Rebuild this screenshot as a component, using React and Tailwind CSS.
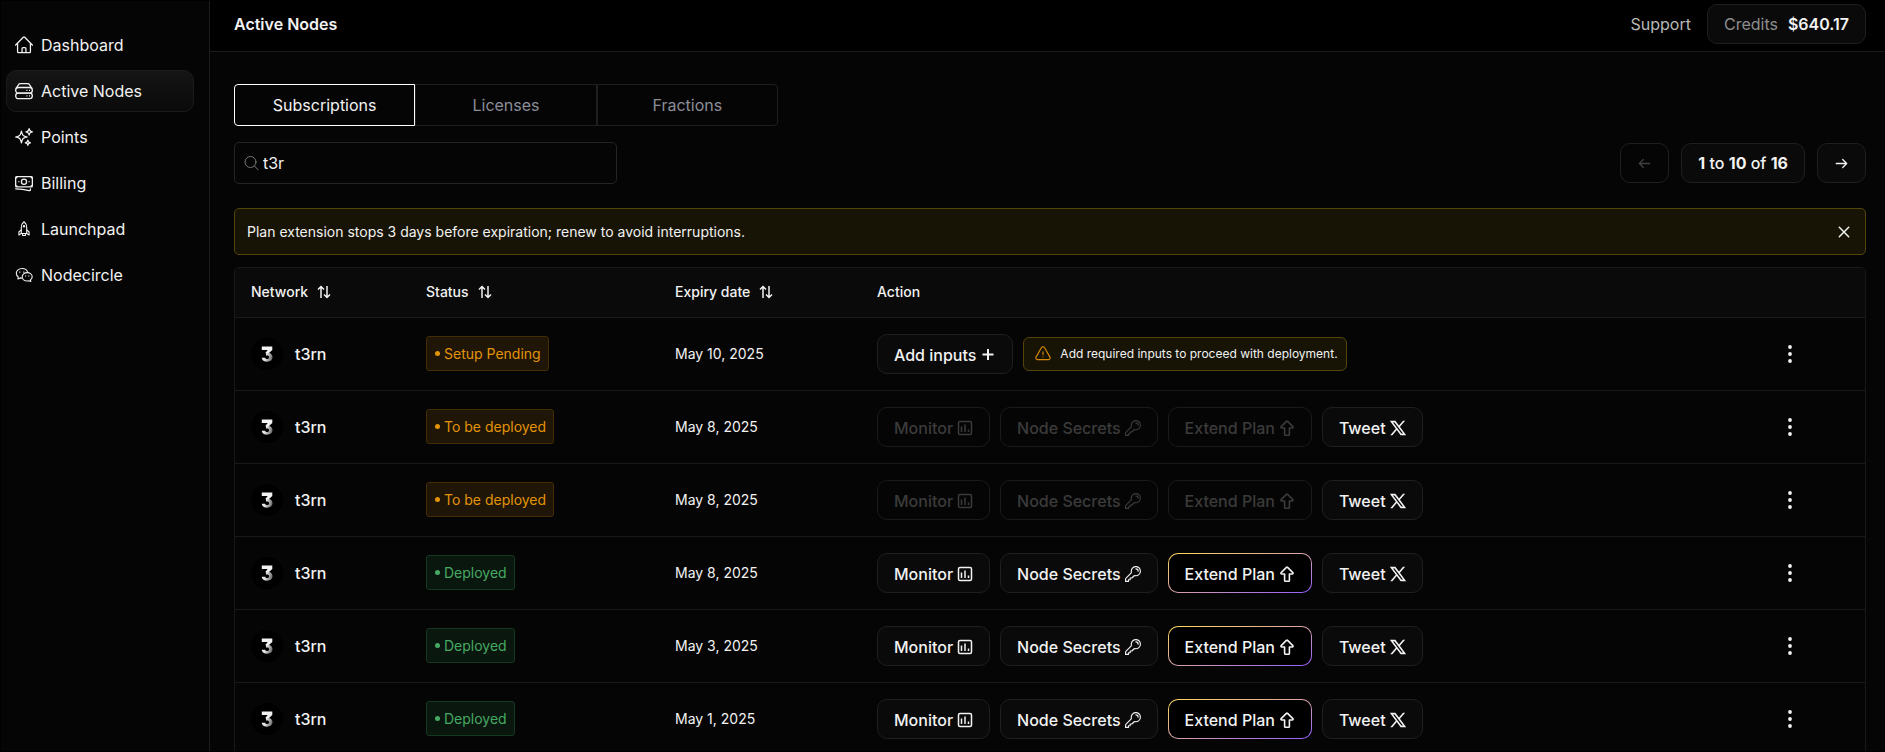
import { useState } from "react";
import {
  HiOutlineBanknotes,
  HiOutlineExclamationTriangle,
  HiOutlineHome,
  HiOutlineKey,
  HiOutlineSparkles,
} from "react-icons/hi2";
import { RiTwitterXLine } from "react-icons/ri";
import { TbArrowBigUp } from "react-icons/tb";

function ServerIcon({ className }) {
  return (
    <svg viewBox="0 0 18 18" fill="none" stroke="currentColor" strokeWidth="1.3" className={className}>
      <path d="M1.2 6.4 3.4 2.8C3.8 2.1 4.5 1.7 5.4 1.7h7.2c.9 0 1.6.4 2 1.1l2.2 3.6" />
      <rect x="0.7" y="5.5" width="16.6" height="5.6" rx="2.6" />
      <rect x="0.7" y="11.1" width="16.6" height="5.6" rx="2.6" />
      <path d="M11.4 8.3h1M14 8.3h1M11.4 13.9h1M14 13.9h1" />
    </svg>
  );
}

function RocketIcon({ className }) {
  return (
    <svg viewBox="0 0 18 18" fill="none" stroke="currentColor" strokeWidth="1.1" strokeLinejoin="round" className={className}>
      <path d="M9 1.8c-1.9 1.5-2.7 3.4-2.7 5.6v6.1h5.4V7.4c0-2.2-.8-4.1-2.7-5.6Z" />
      <path d="M6.3 9.8 3.9 12v2.9l2.4-1.4M11.7 9.8l2.4 2.2v2.9l-2.4-1.4" />
      <path d="M7.6 13.5v2h2.8v-2" />
      <circle cx="9" cy="6.2" r="0.7" />
    </svg>
  );
}

function ChatIcon({ className }) {
  return (
    <svg viewBox="0 0 18 18" fill="none" stroke="currentColor" strokeWidth="1.1" strokeLinejoin="round" className={className}>
      <path d="M12.6 6.2C12 4 9.800 2.500 7.100 2.500 3.900 2.500 1.300 4.600 1.300 7.300c0 1.500.8 2.800 2 3.700l-.4 1.900 2.200-1c.6.1 1.200.2 1.900.2" />
      <path d="M12.200 6.600c-2.800 0-5 1.900-5 4.200s2.200 4.200 5 4.200c.6 0 1.200-.1 1.700-.3l1.900.8-.4-1.600c1.100-.8 1.800-1.900 1.800-3.100 0-2.300-2.200-4.200-5-4.200Z" />
      <path d="M4.800 5.500v1.200M8.800 5.500v1.200M10.600 9.400v1.200M13.800 9.400v1.200" />
    </svg>
  );
}

function ChartIcon({ className }) {
  return (
    <svg viewBox="0 0 16 16" fill="none" stroke="currentColor" strokeWidth="1.5" className={className}>
      <rect x="1.500" y="1.500" width="13" height="13" rx="1.500" />
      <path d="M4.500 6.500V12M8 4.500V12M11.500 9.500V12" />
    </svg>
  );
}

function SortIcon() {
  return (
    <svg viewBox="-1 -1 16 16" fill="none" stroke="currentColor" strokeWidth="1.5" className="size-4">
      <path d="M4 13V1.500M1 4.500l3-3 3 3" />
      <path d="M10 1v11.500M7 9.500l3 3 3-3" />
    </svg>
  );
}

function ArrowIcon({ className }) {
  return (
    <svg viewBox="0 0 15 15" fill="none" stroke="currentColor" strokeWidth="1.3" strokeLinecap="round" strokeLinejoin="round" className={className}>
      <path d="M2.300 7.500h10.400M8.700 3.500l4 4-4 4" />
    </svg>
  );
}

function SearchIcon({ className }) {
  return (
    <svg viewBox="0 0 16 16" fill="none" stroke="currentColor" strokeLinecap="round" className={className}>
      <circle cx="7.500" cy="7" r="5.500" />
      <path d="m11.500 11 3.500 3.700" />
    </svg>
  );
}

function PlusIcon({ className }) {
  return (
    <svg viewBox="0 0 16 16" fill="none" stroke="currentColor" strokeWidth="2" className={className}>
      <path d="M8 2v11M2.500 7.500h11" />
    </svg>
  );
}

function CloseIcon() {
  return (
    <svg viewBox="0 0 18 18" fill="none" stroke="currentColor" strokeWidth="1.5" strokeLinecap="round" className="size-[18px]">
      <path d="m4.300 4.300 9.400 9.400M13.700 4.300l-9.400 9.400" />
    </svg>
  );
}

function DotsIcon() {
  return (
    <svg viewBox="0 0 20 20" fill="currentColor" className="size-5">
      <circle cx="10" cy="3" r="1.9" />
      <circle cx="10" cy="10" r="1.9" />
      <circle cx="10" cy="17" r="1.9" />
    </svg>
  );
}

function NetworkLogo() {
  return (
    <svg viewBox="0 0 32 32" className="size-8 shrink-0" aria-hidden="true">
      <defs>
        <linearGradient id="logo-tail" x1="0" y1="0" x2="1" y2="0.3">
          <stop offset="0" stopColor="#fff" />
          <stop offset="0.5" stopColor="#ddd" />
          <stop offset="1" stopColor="#777" />
        </linearGradient>
      </defs>
      <circle cx="16" cy="16" r="16" fill="#000" />
      <path d="M10.800 8.500h10.500v3.400l-3.600 3.400h-3.600l2.600-3.200h-5.900z" fill="#f2f2f2" />
      <path
        d="M15 14.900h2.400c2.500 0 4.100 1.700 4.100 4.100 0 2.800-2.200 4.700-5.400 4.700-3 0-5-1.500-5.400-4h3.400c.3.900 1 1.300 2 1.300 1.200 0 2-.7 2-1.800s-.8-1.700-2-1.700H15z"
        fill="url(#logo-tail)"
      />
    </svg>
  );
}

const NAV_ITEMS = [
  { label: "Dashboard", icon: HiOutlineHome, viewBox: "1.5 1.5 21 21" },
  { label: "Active Nodes", icon: ServerIcon, active: true },
  { label: "Points", icon: HiOutlineSparkles, viewBox: "1.5 1.5 21 21" },
  { label: "Billing", icon: HiOutlineBanknotes, viewBox: "1.5 1.5 21 21" },
  { label: "Launchpad", icon: RocketIcon },
  { label: "Nodecircle", icon: ChatIcon },
];

const TABS = ["Subscriptions", "Licenses", "Fractions"];

const NODES = [
  { id: 1, status: "Setup Pending", expiry: "May 10, 2025" },
  { id: 2, status: "To be deployed", expiry: "May 8, 2025" },
  { id: 3, status: "To be deployed", expiry: "May 8, 2025" },
  { id: 4, status: "Deployed", expiry: "May 8, 2025" },
  { id: 5, status: "Deployed", expiry: "May 3, 2025" },
  { id: 6, status: "Deployed", expiry: "May 1, 2025" },
];

function StatusBadge({ status }) {
  const tone =
    status === "Deployed"
      ? "border-[#143820] bg-[#0a170e] text-[#46a963]"
      : "border-[#442d05] bg-[#1f1607] text-[#e39307]";

  return (
    <span className={`inline-flex h-[35px] items-center gap-1 rounded-[3px] border pr-[7px] pl-2 align-middle text-sm ${tone}`}>
      <span className="size-[5px] rounded-full bg-current" />
      {status}
    </span>
  );
}

function ActionButton({ children, icon: Icon, viewBox, disabled, highlight }) {
  const look = highlight
    ? "border-transparent [background:linear-gradient(#000,#000)_padding-box,linear-gradient(to_right_bottom,#ffdb5c,#d9a3a8_50%,#935cff)_border-box]"
    : disabled
      ? "border-[#1a1a1a] text-[#3b3b3b]"
      : "border-[#1f1f1f] bg-[#0a0a0a]";

  return (
    <button
      type="button"
      disabled={disabled}
      className={`flex h-10 items-center gap-1 rounded-[10px] border px-4 pt-0.5 font-medium whitespace-nowrap ${look}`}
    >
      {children}
      <Icon className="size-4" {...(viewBox && { viewBox })} />
    </button>
  );
}

function NodeActions({ status }) {
  if (status === "Setup Pending") {
    return (
      <div className="flex items-center gap-2.5">
        <ActionButton icon={PlusIcon}>Add inputs</ActionButton>
        <p className="flex h-[34px] items-center gap-2 rounded-md border border-[#544608] bg-[#171405] pr-2 pl-2.5 text-xs">
          <HiOutlineExclamationTriangle className="size-[18px] text-[#d98b06]" />
          Add required inputs to proceed with deployment.
        </p>
      </div>
    );
  }

  const deployed = status === "Deployed";
  return (
    <div className="flex items-center gap-2.5">
      <ActionButton icon={ChartIcon} disabled={!deployed}>Monitor</ActionButton>
      <ActionButton icon={HiOutlineKey} viewBox="1.5 1.5 21 21" disabled={!deployed}>Node Secrets</ActionButton>
      <ActionButton icon={TbArrowBigUp} viewBox="2 2 20 20" disabled={!deployed} highlight={deployed}>
        Extend Plan
      </ActionButton>
      <ActionButton icon={RiTwitterXLine} viewBox="2 2 20 20">Tweet</ActionButton>
    </div>
  );
}

function Sidebar() {
  return (
    <aside className="w-[209px] shrink-0 border-r border-[#1c1c1c] pt-[23px] pr-[15px] pl-[5px]">
      <nav className="flex flex-col gap-1">
        {NAV_ITEMS.map(({ label, icon: Icon, viewBox, active }) => (
          <a
            key={label}
            href="#"
            className={`flex h-[42px] items-center gap-2 rounded-[10px] border px-2 ${
              active ? "border-[#1b1b1b] bg-linear-to-b from-[#151515] to-[#0a0a0a]" : "border-transparent"
            }`}
          >
            <Icon className="size-[18px]" {...(viewBox && { viewBox })} />
            {label}
          </a>
        ))}
      </nav>
    </aside>
  );
}

function Header() {
  return (
    <header className="flex items-center border-b border-[#1c1c1c] bg-black pt-[3px] pr-[18px] pb-[7px] pl-6">
      <h1 className="font-semibold">Active Nodes</h1>
      <a href="#" className="ml-auto text-[#b8b8b8]">Support</a>
      <button
        type="button"
        className="ml-4 flex h-10 items-center gap-2.5 rounded-[10px] border border-[#1f1f1f] bg-[#0a0a0a] px-4"
      >
        <span className="text-[#8e8e8e]">Credits</span>
        <span className="font-semibold">$640.17</span>
      </button>
    </header>
  );
}

export default function App() {
  const [tab, setTab] = useState("Subscriptions");
  const [query, setQuery] = useState("t3r");
  const [noticeOpen, setNoticeOpen] = useState(true);

  return (
    <div className="h-screen overflow-hidden bg-black p-px font-[Inter,sans-serif] text-base text-[#f2f2f2]">
      <div className="flex h-full bg-[#050505]">
        <Sidebar />

        <div className="flex min-w-0 flex-1 flex-col">
          <Header />

          <main className="min-h-0 flex-1 overflow-hidden pt-8 pr-[18px] pl-6">
            <div role="tablist" className="flex w-136">
              {TABS.map((name) => (
                <button
                  key={name}
                  type="button"
                  role="tab"
                  aria-selected={tab === name}
                  onClick={() => setTab(name)}
                  className={`h-[42px] flex-1 border first:rounded-l last:rounded-r ${
                    tab === name ? "border-white" : "border-[#1f1f1f] text-[#8b8d98]"
                  }`}
                >
                  {name}
                </button>
              ))}
            </div>

            <div className="mt-4 flex items-center gap-3">
              <label className="mr-auto flex h-[42px] w-[383px] items-center gap-1 rounded-[5px] border border-[#242424] px-2">
                <SearchIcon className="size-4 text-[#777]" />
                <input
                  type="text"
                  aria-label="Search nodes"
                  value={query}
                  onChange={(e) => setQuery(e.target.value)}
                  className="min-w-0 flex-1 bg-transparent outline-none"
                />
              </label>
              <button
                type="button"
                disabled
                aria-label="Previous page"
                className="flex h-10 items-center rounded-[10px] border border-[#1f1f1f] px-4 text-[#3f3f3f]"
              >
                <ArrowIcon className="size-[15px] rotate-180" />
              </button>
              <p className="flex h-10 items-center rounded-[10px] border border-[#1f1f1f] bg-[#0a0a0a] px-4 font-medium whitespace-pre">
                <b>1</b> to <b>10</b> of <b>16</b>
              </p>
              <button
                type="button"
                aria-label="Next page"
                className="flex h-10 items-center rounded-[10px] border border-[#1f1f1f] bg-[#0a0a0a] px-4"
              >
                <ArrowIcon className="size-[15px]" />
              </button>
            </div>

            {noticeOpen && (
              <div className="mt-6 flex h-[47px] items-center justify-between rounded-[5px] border border-[#544608] bg-[#171405] px-3 text-sm">
                Plan extension stops 3 days before expiration; renew to avoid interruptions.
                <button type="button" aria-label="Dismiss" onClick={() => setNoticeOpen(false)}>
                  <CloseIcon />
                </button>
              </div>
            )}

            <div className="mt-3 overflow-hidden rounded-t-[5px] border border-[#191919]">
              <table className="w-full table-fixed text-left text-sm">
                <thead>
                  <tr className="h-[49px] border-b border-[#191919] bg-[#0a0a0a]">
                    <th className="w-[175px] px-4 font-medium">
                      <span className="flex items-center gap-2">Network <SortIcon /></span>
                    </th>
                    <th className="w-[249px] px-4 font-medium">
                      <span className="flex items-center gap-2">Status <SortIcon /></span>
                    </th>
                    <th className="w-[202px] px-4 font-medium">
                      <span className="flex items-center gap-2">Expiry date <SortIcon /></span>
                    </th>
                    <th className="px-4 font-medium">Action</th>
                    <th className="w-[150px]" />
                  </tr>
                </thead>
                <tbody>
                  {NODES.map((node) => (
                    <tr key={node.id} className="h-[73px] border-b border-[#191919]">
                      <td className="px-4">
                        <span className="flex items-center gap-3 text-base font-medium">
                          <NetworkLogo />
                          t3rn
                        </span>
                      </td>
                      <td className="px-4">
                        <StatusBadge status={node.status} />
                      </td>
                      <td className="px-4">{node.expiry}</td>
                      <td className="px-4 text-base">
                        <NodeActions status={node.status} />
                      </td>
                      <td>
                        <button type="button" aria-label="More actions" className="mx-auto block">
                          <DotsIcon />
                        </button>
                      </td>
                    </tr>
                  ))}
                </tbody>
              </table>
            </div>
          </main>
        </div>
      </div>
    </div>
  );
}
